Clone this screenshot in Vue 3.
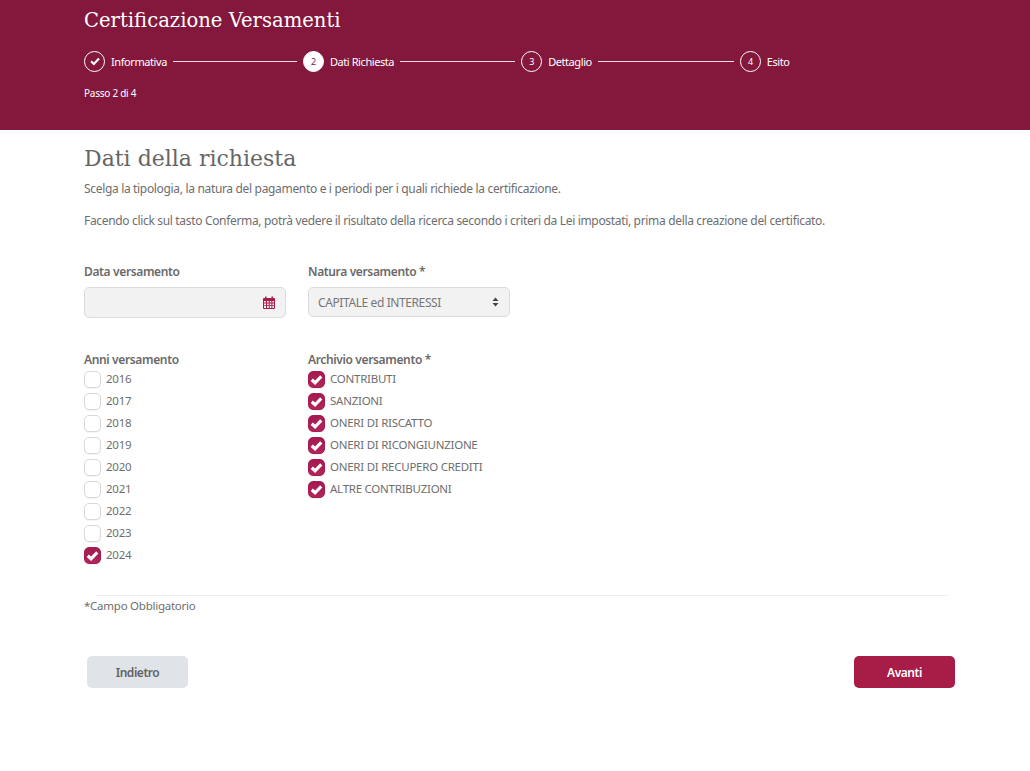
<script setup>
const steps = [
  { label: 'Informativa', done: true, line: 124 },
  { label: 'Dati Richiesta', n: 2, active: true, line: 115 },
  { label: 'Dettaglio', n: 3, line: 136 },
  { label: 'Esito', n: 4 },
]
const years = [2016, 2017, 2018, 2019, 2020, 2021, 2022, 2023, 2024]
const archives = ['CONTRIBUTI', 'SANZIONI', 'ONERI DI RISCATTO', 'ONERI DI RICONGIUNZIONE', 'ONERI DI RECUPERO CREDITI', 'ALTRE CONTRIBUZIONI']
</script>

<template>
  <div class="page">
    <header class="hero">
      <h1>Certificazione Versamenti</h1>
      <div class="stepper">
        <template v-for="s in steps" :key="s.label">
          <span class="circle" :class="{ active: s.active }">
            <svg v-if="s.done" width="12" height="12" viewBox="0 0 12 12"><path d="M2 6.2 4.9 9 10 3.6" fill="none" stroke="#fff" stroke-width="2.2"/></svg>
            <template v-else>{{ s.n }}</template>
          </span>
          <span class="step-label">{{ s.label }}</span>
          <span v-if="s.line" class="line" :style="{ width: s.line + 'px' }"></span>
        </template>
      </div>
      <p class="passo">Passo 2 di 4</p>
    </header>
    <main class="content">
      <h2>Dati della richiesta</h2>
      <p class="intro first">Scelga la tipologia, la natura del pagamento e i periodi per i quali richiede la certificazione.</p>
      <p class="intro">Facendo click sul tasto Conferma, potrà vedere il risultato della ricerca secondo i criteri da Lei impostati, prima della creazione del certificato.</p>

      <div class="grid fields">
        <div>
          <label class="lab">Data versamento</label>
          <div class="control date">
            <svg width="12" height="13" viewBox="0 0 12 13"><path fill="#a61c4f" fill-rule="evenodd" d="M2 0.5h1.5V2h5V0.5H10V2h1a1 1 0 0 1 1 1v9a1 1 0 0 1-1 1H1a1 1 0 0 1-1-1V3a1 1 0 0 1 1-1h1ZM1 5v1.6h2V5Zm3 0v1.6h1.7V5Zm2.7 0v1.6h1.7V5Zm2.7 0v1.6H11V5ZM1 7.5v1.7h2V7.5Zm3 0v1.7h1.7V7.5Zm2.7 0v1.7h1.7V7.5Zm2.7 0v1.7H11V7.5ZM1 10.1V12h2v-1.9Zm3 0V12h1.7v-1.9Zm2.7 0V12h1.7v-1.9Zm2.7 0V12H11v-1.9Z"/></svg>
          </div>
        </div>
        <div>
          <label class="lab">Natura versamento *</label>
          <div class="control select">
            <span>CAPITALE ed INTERESSI</span>
            <svg width="7" height="10" viewBox="0 0 7 10"><path fill="#444" d="M3.5 0.5 6.5 4H0.5ZM3.5 9.5 0.5 6h6Z"/></svg>
          </div>
        </div>
      </div>

      <div class="grid checks">
        <div>
          <div class="lab tight">Anni versamento</div>
          <div v-for="y in years" :key="y" class="row">
            <span class="box" :class="{ on: y === 2024 }">
              <svg v-if="y === 2024" width="13" height="13" viewBox="0 0 12 12"><path d="M1.6 6.2 4.7 9 10.4 3.2" fill="none" stroke="#fff" stroke-width="2.9"/></svg>
            </span>
            <span>{{ y }}</span>
          </div>
        </div>
        <div>
          <div class="lab tight">Archivio versamento *</div>
          <div v-for="a in archives" :key="a" class="row">
            <span class="box on">
              <svg width="13" height="13" viewBox="0 0 12 12"><path d="M1.6 6.2 4.7 9 10.4 3.2" fill="none" stroke="#fff" stroke-width="2.9"/></svg>
            </span>
            <span>{{ a }}</span>
          </div>
        </div>
      </div>

      <hr class="rule" />
      <p class="note">*Campo Obbligatorio</p>

      <div class="actions">
        <button class="btn back">Indietro</button>
        <button class="btn next">Avanti</button>
      </div>
    </main>
  </div>
</template>

<style>
html, body { margin: 0; background: #fff; }
</style>

<style scoped>
.page { width: 1030px; height: 771px; overflow: hidden; font-family: "Noto Sans", "Open Sans", sans-serif; font-size: 12px; letter-spacing: -0.33px; color: #6e6e6e; }
.hero { height: 130px; box-sizing: border-box; background: #84173c; color: #fff; padding: 8px 0 0 84px; }
h1 { margin: 0; font: 400 19.6px/26px "DejaVu Serif", serif; letter-spacing: 0; }
.stepper { display: flex; align-items: center; margin-top: 16px; height: 22px; }
.circle { width: 19px; height: 19px; border: 1.2px solid #fff; border-radius: 50%; display: flex; align-items: center; justify-content: center; font-size: 9px; flex: none; }
.circle.active { background: #fff; color: #84173c; }
.step-label { margin-left: 6px; font-size: 11px; letter-spacing: -0.42px; }
.line { height: 1px; background: #f0dfe5; margin: 0 6px; }
.passo { margin: 14px 0 0; font-size: 10px; line-height: 14px; letter-spacing: -0.25px; }
.content { padding: 0 82px 0 84px; }
h2 { margin: 14px 0 0; font: 400 22px/30px "DejaVu Serif", serif; letter-spacing: 0; color: #666; }
.intro { margin: 0; font-size: 12px; line-height: 18px; }
.intro.first { margin-top: 6px; }
.intro + .intro { margin-top: 14px; }
.grid { display: grid; grid-template-columns: 202px 202px; column-gap: 22px; }
.fields { margin-top: 34px; }
.lab { display: block; font-weight: 600; font-size: 12px; line-height: 16px; color: #6a6a6a; margin-bottom: 7px; letter-spacing: -0.36px; }
.lab.tight { margin-bottom: -1px; }
.control { box-sizing: border-box; height: 31px; border: 1px solid #dcdcdc; border-radius: 5px; background: #f2f2f2; display: flex; align-items: center; justify-content: space-between; padding: 0 10px 0 9px; letter-spacing: -0.4px; color: #777; }
.date { justify-content: flex-end; }
.select { height: 30px; }
.checks { margin-top: 34px; }
.row { display: flex; align-items: center; gap: 5px; height: 22px; font-size: 11.5px; letter-spacing: -0.25px; }
.box { width: 17px; height: 17px; margin-top: 2px; box-sizing: border-box; border: 1px solid #d8d8d8; border-radius: 5px; display: flex; align-items: center; justify-content: center; background: #fff; flex: none; box-shadow: 0 1px 1px rgba(0,0,0,.04); }
.box.on { background: linear-gradient(#a31a50, #b0265c); border-color: #a81c50; }
.rule { margin: 30px 0 0 12px; border: 0; border-top: 1px solid #eee; }
.note { margin: 2px 0 0; line-height: 16px; font-size: 11.5px; letter-spacing: -0.25px; }
.actions { display: flex; justify-content: space-between; margin: 42px -7px 0 3px; }
.btn { width: 101px; height: 32px; border: 0; border-radius: 5px; font: 600 12px "Noto Sans", sans-serif; letter-spacing: -0.45px; }
.back { background: #e0e3e8; color: #636363; }
.next { background: #a81c48; color: #fff; }
</style>
